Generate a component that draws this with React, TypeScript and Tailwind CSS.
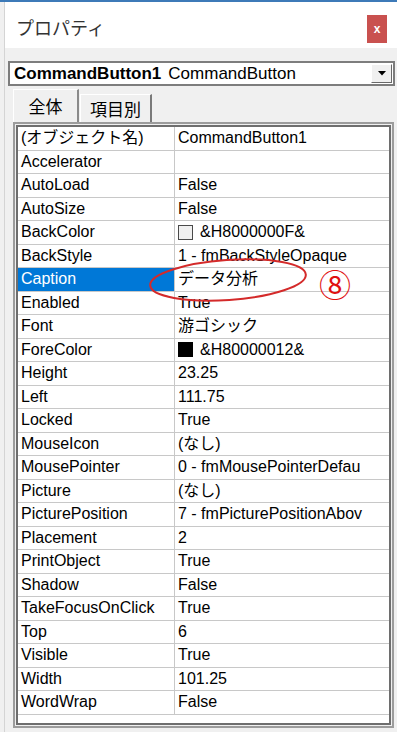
import React from "react";

type Row = {
  name: string;
  value: string;
  swatch?: "light" | "dark";
};

const rows: Row[] = [
  { name: "(オブジェクト名)", value: "CommandButton1" },
  { name: "Accelerator", value: "" },
  { name: "AutoLoad", value: "False" },
  { name: "AutoSize", value: "False" },
  { name: "BackColor", value: "&H8000000F&", swatch: "light" },
  { name: "BackStyle", value: "1 - fmBackStyleOpaque" },
  { name: "Caption", value: "データ分析" },
  { name: "Enabled", value: "True" },
  { name: "Font", value: "游ゴシック" },
  { name: "ForeColor", value: "&H80000012&", swatch: "dark" },
  { name: "Height", value: "23.25" },
  { name: "Left", value: "111.75" },
  { name: "Locked", value: "True" },
  { name: "MouseIcon", value: "(なし)" },
  { name: "MousePointer", value: "0 - fmMousePointerDefau" },
  { name: "Picture", value: "(なし)" },
  { name: "PicturePosition", value: "7 - fmPicturePositionAbov" },
  { name: "Placement", value: "2" },
  { name: "PrintObject", value: "True" },
  { name: "Shadow", value: "False" },
  { name: "TakeFocusOnClick", value: "True" },
  { name: "Top", value: "6" },
  { name: "Visible", value: "True" },
  { name: "Width", value: "101.25" },
  { name: "WordWrap", value: "False" },
];

const font = "font-['Liberation_Sans','Noto_Sans_CJK_JP',sans-serif]";

const PropRow: React.FC<{ row: Row }> = ({ row }) => {
  const selected = row.name === "Caption";
  return (
    <div className="flex h-[23.5px] border-b border-[#c8c8c8] text-[16px] text-black">
      <div
        className={`w-[157px] shrink-0 flex items-center pl-[3px] border-r border-[#c8c8c8] whitespace-nowrap overflow-hidden ${
          selected ? "bg-[#0078d7] text-white" : ""
        }`}
      >
        {row.name}
      </div>
      <div className="flex-1 min-w-0 flex items-center pl-[3px] whitespace-nowrap overflow-hidden">
        {row.swatch === "light" && (
          <span className="w-[15px] h-[15px] mr-[7px] shrink-0 border border-[#4a4a4a] bg-[#f0f0f0]" />
        )}
        {row.swatch === "dark" && (
          <span className="w-[15px] h-[15px] mr-[7px] shrink-0 border border-black bg-black" />
        )}
        {row.value}
      </div>
    </div>
  );
};

const App: React.FC = () => {
  return (
    <div className={`relative w-[397px] h-[732px] overflow-hidden bg-[#f0f0f0] ${font}`}>
      <div className="h-[2px] bg-[#3d7ab8]" />
      <div className="flex h-[730px] w-[393px] border-l border-[#d4d4d4] ml-[4px]">
        <div className="w-[392px] min-w-0 flex flex-col">
          {/* title bar */}
          <div className="h-[46px] bg-white flex items-start justify-between pt-[13px] pl-[11px] pr-[10px]">
            <span className="text-[18px] leading-[24px] text-[#333] font-['Noto_Sans_CJK_JP',sans-serif]">
              プロパティ
            </span>
            <div className="w-[20px] h-[28px] bg-[#c9514f] flex items-center justify-center text-white text-[12px] font-bold leading-none">
              x
            </div>
          </div>

          {/* object combo */}
          <div className="mt-[13px] ml-[3px] mr-[2px] h-[25px] border-2 border-[#7d7d7d] bg-white flex items-center">
            <span className="pl-[4px] text-[17px] font-bold text-black whitespace-nowrap">CommandButton1</span>
            <span className="pl-[7px] text-[17px] text-black whitespace-nowrap">CommandButton</span>
            <div className="ml-auto mr-[1px] w-[21px] h-[19px] bg-[#f0f0f0] border border-t-white border-l-white border-b-[#696969] border-r-[#696969] flex items-center justify-center">
              <svg width="8" height="5" viewBox="0 0 8 5">
                <path d="M0 0 H8 L4 4.5 Z" fill="#000" />
              </svg>
            </div>
          </div>

          {/* tabs */}
          <div className="mt-[3px] ml-[8px] h-[33px] flex items-end">
            <div className="h-[33px] w-[66px] flex items-center justify-center border-t border-l border-white border-r-2 border-r-[#8a8a8a] text-[17px] text-black font-['Noto_Sans_CJK_JP',sans-serif] bg-[#f0f0f0]">
              全体
            </div>
            <div className="h-[28px] w-[72px] ml-[1px] flex items-center justify-center border-t border-l border-white border-r-2 border-r-[#7a7a7a] text-[17px] text-black font-['Noto_Sans_CJK_JP',sans-serif]">
              項目別
            </div>
          </div>

          {/* property grid */}
          <div className="ml-[8px] w-[381px] h-[606px] border-2 border-[#9c9c9c] p-[1px] bg-[#f0f0f0]">
            <div className="h-full border-2 border-[#6e6e6e] bg-white overflow-hidden">
              {rows.map((row) => (
                <PropRow key={row.name} row={row} />
              ))}
            </div>
          </div>
        </div>
      </div>

      {/* annotation */}
      <svg className="absolute left-[146px] top-[255px]" width="164" height="50" viewBox="0 0 164 50">
        <ellipse cx="82" cy="25" rx="78" ry="20" fill="none" stroke="#d42a2a" strokeWidth="2" transform="rotate(-4 82 25)" />
      </svg>
      <span className="absolute left-[319px] top-[267px] text-[32px] leading-[32px] text-[#e01010] font-['Noto_Sans_CJK_JP',sans-serif]">
        ⑧
      </span>
    </div>
  );
};

export default App;
